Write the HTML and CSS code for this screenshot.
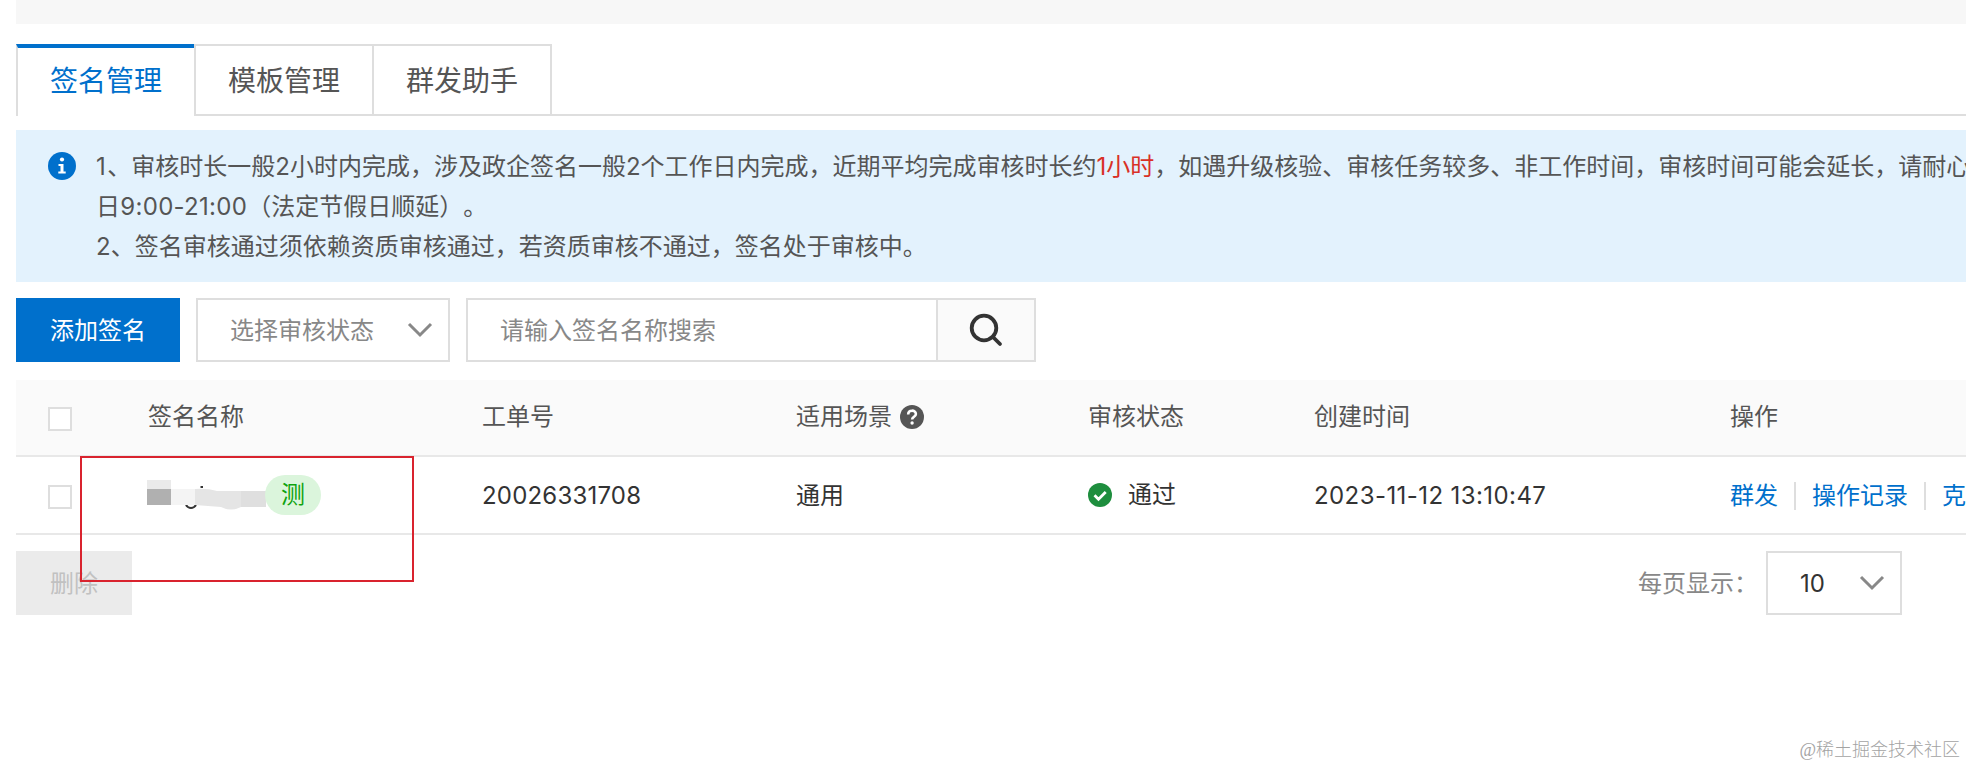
FILE: index.html
```html
<!DOCTYPE html>
<html lang="zh-CN">
<head>
<meta charset="UTF-8" />
<meta name="viewport" content="width=device-width, initial-scale=1" />
<title>签名管理</title>
<link rel="stylesheet" href="styles.css">
</head>
<body>
  <div class="top-strip"></div>

  <nav class="tabs">
    <a class="tab active">签名管理</a>
    <a class="tab">模板管理</a>
    <a class="tab">群发助手</a>
    <div class="tabs-rest"></div>
  </nav>

  <section class="notice">
    <svg class="notice-icon" width="28" height="28" viewBox="0 0 28 28">
      <circle cx="14" cy="14" r="14" fill="#0070cc"/>
      <circle cx="14" cy="7.5" r="2.1" fill="#fff"/>
      <path d="M10.5 12h5v7.5h2.2v2h-7.4v-2h2.2V14h-2z" fill="#fff"/>
    </svg>
    <div class="notice-text">
      <p><span class="index">1</span>、审核时长一般2小时内完成，涉及政企签名一般2个工作日内完成，近期平均完成审核时长约<span class="warn">1小时</span>，如遇升级核验、审核任务较多、非工作时间，审核时间可能会延长，请耐心</p>
      <p><span class="hours">日9:00-21:00</span>（法定节假日顺延）。</p>
      <p>2、签名审核通过须依赖资质审核通过，若资质审核不通过，签名处于审核中。</p>
    </div>
  </section>

  <div class="toolbar">
    <button class="btn primary" type="button">添加签名</button>
    <div class="select status-select">
      <span>选择审核状态</span>
      <svg width="26" height="16" viewBox="0 0 26 16"><path d="M2 2l11 11L24 2" fill="none" stroke="#888" stroke-width="3"/></svg>
    </div>
    <div class="search">
      <span class="search-input">请输入签名名称搜索</span>
      <span class="search-btn">
        <svg width="34" height="34" viewBox="0 0 34 34" fill="none" stroke="#333" stroke-width="3.8" stroke-linecap="round"><circle cx="15" cy="15" r="12.3"/><path d="M24 24l7 7"/></svg>
      </span>
    </div>
  </div>

  <div class="table">
    <div class="row head">
      <span class="checkbox"></span>
      <span>签名名称</span>
      <span>工单号</span>
      <span class="with-icon">适用场景
        <svg width="24" height="24" viewBox="0 0 24 24"><circle cx="12" cy="12" r="12" fill="#555"/><path d="M8.2 9.4c0-5 7.7-4.8 7.7-.4 0 2.7-3.8 2.7-3.8 5.5" fill="none" stroke="#fff" stroke-width="2.6"/><circle cx="12.1" cy="18" r="1.7" fill="#fff"/></svg>
      </span>
      <span>审核状态</span>
      <span>创建时间</span>
      <span>操作</span>
    </div>
    <div class="row">
      <span class="checkbox"></span>
      <span class="sign-name">
        <svg class="mosaic" width="126" height="40" viewBox="0 0 126 40">
          <path d="M39 30q2 3 5 3t5-3" fill="none" stroke="#333" stroke-width="2.2"/>
          <path d="M0 5h24v10H0z" fill="#eaeaea"/>
          <path d="M0 14h24v16H0z" fill="#b0b0b0"/>
          <path d="M24 14h24v16H24z" fill="#f4f4f4"/>
          <path d="M48 14q12-1 22 2h49v16H94q-10 5-20 0l-26-2z" fill="#e5e5e5"/>
          <path d="M94 16h25v16H94z" fill="#dfdfdf"/>
          <path d="M53.500 11h2.500v2h-2.500z" fill="#333"/>
        </svg>
        <b class="badge">测</b>
      </span>
      <span class="order-no">20026331708</span>
      <span class="scene">通用</span>
      <span class="with-icon passed">
        <svg width="24" height="24" viewBox="0 0 24 24"><circle cx="12" cy="12" r="12" fill="#1e8e3e"/><path d="M6.500 12.200l4 4 7.200-7.200" fill="none" stroke="#fff" stroke-width="2.800"/></svg>
        通过
      </span>
      <span class="created">2023-11-12 13:10:47</span>
      <span class="actions"><a>群发</a><i></i><a>操作记录</a><i></i><a>克</a></span>
    </div>
  </div>

  <div class="footer">
    <button class="btn disabled" type="button">删除</button>
    <div class="pager">
      <span class="pager-label">每页显示：</span>
      <div class="select page-size">
        <span>10</span>
        <svg width="26" height="16" viewBox="0 0 26 16"><path d="M2 2l11 11L24 2" fill="none" stroke="#888" stroke-width="3"/></svg>
      </div>
    </div>
  </div>

  <div class="highlight"></div>
  <div class="watermark">@稀土掘金技术社区</div>
</body>
</html>
```
FILE: styles.css
```css
* {
  box-sizing: border-box;
}
body {
  margin: 0;
  padding-left: 16px;
  position: relative;
  height: 766px;
  overflow: hidden;
  background: #fff;
  color: #333;
  font-family: Inter, "Noto Sans CJK SC", sans-serif;
  font-size: 24px;
  line-height: 40px;
  white-space: nowrap;
  text-spacing-trim: space-all;
}
p {
  margin: 0;
}
.top-strip {
  height: 24px;
  background: #f7f7f7;
  margin-bottom: 20px;
}
.tabs {
  display: flex;
  height: 72px;
  margin-bottom: 14px;
}
.tab {
  width: 178px;
  border: 2px solid #dedede;
  border-right: none;
  font-size: 28px;
  line-height: 70px;
  text-align: center;
  color: #555;
}
.tab.active {
  border-top: 4px solid #0070cc;
  border-bottom: none;
  line-height: 66px;
  color: #0070cc;
}
.tabs-rest {
  flex: 1;
  border-left: 2px solid #dedede;
  border-bottom: 2px solid #dedede;
}
.notice {
  display: flex;
  height: 152px;
  padding: 17px 0 0 32px;
  background: #e3f2fd;
  color: #555;
  overflow: hidden;
}
.notice-icon {
  flex: none;
  margin: 5px 20px 0 0;
}
.index {
  letter-spacing: 1.5px;
}
.hours {
  letter-spacing: 0.3px;
}
.warn {
  color: #d93026;
}
.toolbar {
  display: flex;
  gap: 16px;
  margin: 16px 0 18px;
}
.btn {
  height: 64px;
  padding: 2px 34px 0;
  border: none;
  font: inherit;
}
.primary {
  width: 164px;
  background: #0070cc;
  color: #fff;
}
.disabled {
  width: 116px;
  background: #ebebeb;
  color: #c1c1c1;
}
.select {
  display: flex;
  align-items: center;
  justify-content: space-between;
  height: 64px;
  border: 2px solid #dedede;
}
.select span {
  padding-top: 2px;
}
.status-select {
  width: 254px;
  padding: 0 15px 0 32px;
  color: #888;
}
.search {
  display: flex;
  width: 570px;
  height: 64px;
  border: 2px solid #dedede;
  line-height: 62px;
  color: #888;
}
.search-input {
  flex: 1;
  padding-left: 32px;
}
.search-btn {
  display: flex;
  align-items: center;
  justify-content: center;
  width: 98px;
  border-left: 2px solid #dedede;
  background: #fafafa;
}
.row {
  display: grid;
  grid-template-columns: 100px 334px 314px 292px 226px 416px 240px;
  align-items: center;
  height: 78px;
  padding-left: 32px;
  border-bottom: 2px solid #e8e8e8;
}
.head {
  height: 77px;
  padding-bottom: 2px;
  background: #fafafa;
  color: #555;
}
.checkbox {
  width: 24px;
  height: 24px;
  margin-top: 3px;
  border: 2px solid #dedede;
  background: #fff;
}
.head .checkbox {
  margin-top: 5px;
}
.with-icon {
  display: flex;
  align-items: center;
  gap: 8px;
}
.passed {
  gap: 16px;
}
.order-no, .scene, .created, .actions {
  padding-top: 2px;
}
.order-no {
  letter-spacing: 0.2px;
}
.created {
  letter-spacing: 0.42px;
}
.sign-name {
  display: flex;
  align-items: center;
}
.mosaic {
  flex: none;
  margin: 0 -8px 0 -1px;
}
.badge {
  width: 56px;
  height: 40px;
  border-radius: 20px;
  background: #dbf5dc;
  color: #0fa30f;
  font-weight: 400;
  text-align: center;
}
.actions {
  display: flex;
  align-items: center;
  color: #0070cc;
}
.actions i {
  width: 2px;
  height: 28px;
  margin: 0 16px;
  background: #dedede;
}
.footer {
  display: flex;
  justify-content: space-between;
  margin-top: 16px;
  padding-right: 64px;
}
.pager {
  display: flex;
  align-items: center;
  gap: 8px;
  color: #888;
}
.pager-label {
  padding-top: 2px;
}
.page-size {
  width: 136px;
  padding: 0 15px 0 32px;
  color: #333;
}
/* red marker box lying over the first row */
.highlight {
  position: absolute;
  left: 80px;
  top: 456px;
  width: 334px;
  height: 126px;
  border: 2px solid #d9232e;
}
.watermark {
  position: absolute;
  right: 6px;
  bottom: 4px;
  font-family: "Liberation Serif", "Noto Sans CJK SC", serif;
  font-size: 18px;
  font-weight: 300;
  line-height: 24px;
  color: #a3a3a3;
}
```
